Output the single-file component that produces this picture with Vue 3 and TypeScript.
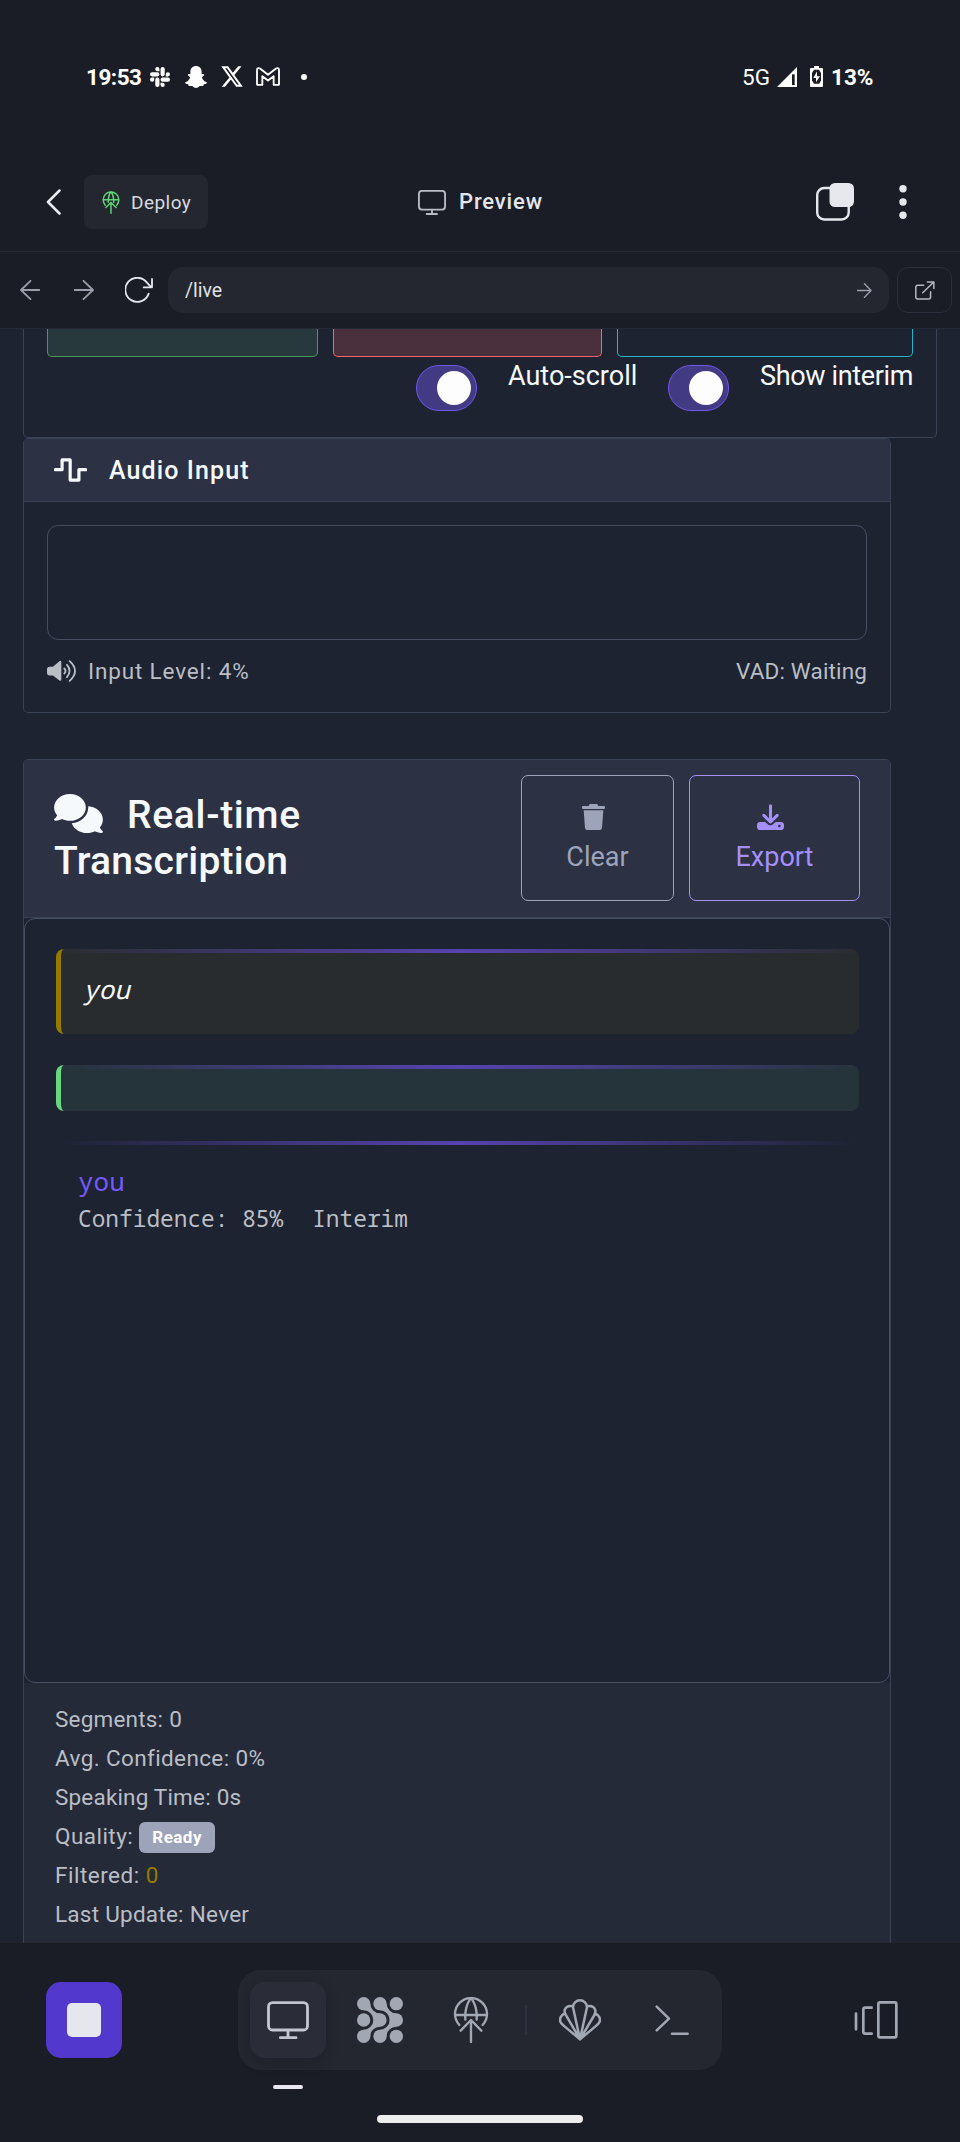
<script setup lang="ts">
interface Stat {
  label: string
  value: string
  cls: string
  kind?: 'badge' | 'warn'
}

const stats: Stat[] = [
  { label: 'Segments:', value: '0', cls: 'segments' },
  { label: 'Avg. Confidence:', value: '0%', cls: 'confidence' },
  { label: 'Speaking Time:', value: '0s', cls: 'speaking' },
  { label: 'Quality:', value: 'Ready', cls: 'quality', kind: 'badge' },
  { label: 'Filtered:', value: '0', cls: 'filtered', kind: 'warn' },
  { label: 'Last Update:', value: 'Never', cls: 'updated' },
]

const toggles = [
  { label: 'Auto-scroll', cls: 'lbl-scroll' },
  { label: 'Show interim', cls: 'lbl-interim' },
]

const gridDots = [0, 49, 98].flatMap((y) => [0, 49, 98].map((x) => ({ x, y })))
const neck = 'M20 0A29 29 0 0 0 49 29L29 49A29 29 0 0 0 0 20Z'
</script>

<template>
  <div class="screen">
    <div class="status">
      <span class="clock">19:53</span>
      <svg class="slack" viewBox="0 0 24 24" fill="#fff"><path d="M5.042 15.165a2.528 2.528 0 0 1-2.52 2.523A2.528 2.528 0 0 1 0 15.165a2.527 2.527 0 0 1 2.522-2.52h2.52v2.52zM6.313 15.165a2.527 2.527 0 0 1 2.521-2.52 2.527 2.527 0 0 1 2.521 2.52v6.313A2.528 2.528 0 0 1 8.834 24a2.528 2.528 0 0 1-2.521-2.522v-6.313zM8.834 5.042a2.528 2.528 0 0 1-2.521-2.52A2.528 2.528 0 0 1 8.834 0a2.528 2.528 0 0 1 2.521 2.522v2.52H8.834zM8.834 6.313a2.528 2.528 0 0 1 2.521 2.521 2.528 2.528 0 0 1-2.521 2.521H2.522A2.528 2.528 0 0 1 0 8.834a2.528 2.528 0 0 1 2.522-2.521h6.312zM18.956 8.834a2.528 2.528 0 0 1 2.522-2.521A2.528 2.528 0 0 1 24 8.834a2.528 2.528 0 0 1-2.522 2.521h-2.522V8.834zM17.688 8.834a2.528 2.528 0 0 1-2.523 2.521 2.527 2.527 0 0 1-2.52-2.521V2.522A2.527 2.527 0 0 1 15.165 0a2.528 2.528 0 0 1 2.523 2.522v6.312zM15.165 18.956a2.528 2.528 0 0 1 2.523 2.522A2.528 2.528 0 0 1 15.165 24a2.527 2.527 0 0 1-2.52-2.522v-2.522h2.52zM15.165 17.688a2.527 2.527 0 0 1-2.52-2.523 2.526 2.526 0 0 1 2.52-2.52h6.313A2.527 2.527 0 0 1 24 15.165a2.528 2.528 0 0 1-2.522 2.523h-6.313z" /></svg>
      <svg class="snap" viewBox="0 0 66 66" fill="#fff"><path d="M33 0C43 0 50 7 50 17v8c3 0 6-2 7 1 1 4-6 5-6 8 0 6 7 13 14 15 2 2-2 5-8 6-2 1-1 5-3 5-5 0-8-1-11 1-3 3-6 5-10 5s-7-2-10-5c-3-2-6-1-11-1-2 0-1-4-3-5-6-1-10-4-8-6 7-2 14-9 14-15 0-3-7-4-6-8 1-3 4-1 7-1v-8C16 7 23 0 33 0z" /></svg>
      <svg class="xlogo" viewBox="1 2 22 20" preserveAspectRatio="none" fill="#fff"><path d="M18.244 2.25h3.308l-7.227 8.26 8.502 11.24H16.17l-5.214-6.817L4.99 21.75H1.68l7.73-8.835L1.254 2.25H8.08l4.713 6.231zm-1.161 17.52h1.833L7.084 4.126H5.117z" /></svg>
      <svg class="gmail" viewBox="0 0 72 56" fill="none" stroke="#fff" stroke-width="5.5" stroke-linejoin="round"><path d="M3 10q0-10 9-6l24 19L60 4q9-4 9 6v42q0 1-2 1H53V27L36 40 19 27v26H5q-2 0-2-2z" /></svg>
      <i class="more-dot" />
      <span class="fill" />
      <span class="net">5G</span>
      <svg class="signal" viewBox="0 0 60 60"><path d="M0 60L60 0v60z" fill="#fff" /><path d="M45 22h8v32h-8z" fill="#1a1d25" /></svg>
      <svg class="battery" viewBox="0 0 39 63"><path d="M12 0h15v6h9q3 0 3 3v51q0 3-3 3H3q-3 0-3-3V9q0-3 3-3h9z" fill="#fff" /><path d="M12 11h15l6 10v22l-5 10H12L6 43V21z" fill="#1a1d25" /><path d="M21 16v15h9L18 49V36h-8z" fill="#fff" /></svg>
      <span class="pct">13%</span>
    </div>

    <header class="titlebar">
      <svg class="chev" viewBox="0 0 15 26" fill="none" stroke="#e9ebf0" stroke-width="2.5" stroke-linecap="round" stroke-linejoin="round"><path d="M13.500 1.500L2 13l11.500 11.500" /></svg>
      <button class="deploy">
        <svg viewBox="1359 199 108 141" fill="none" stroke="#5fd675" stroke-width="9" stroke-linecap="round" stroke-linejoin="round"><path d="M1378 286A48 48 0 1 1 1448 286M1412 205Q1396 225 1396 268M1414 205Q1430 225 1430 268M1366 253H1460M1413 270V335M1382 300L1413 269L1444 300" /></svg>
        <span>Deploy</span>
      </button>
      <div class="title">
        <svg viewBox="0 0 84 75" fill="none" stroke="#b9bdc8" stroke-width="5.5" stroke-linecap="round"><rect x="2.800" y="2.800" width="78.400" height="56" rx="9" /><path d="M42 59v13M26 72h31" /></svg>
        <span>Preview</span>
      </div>
      <span class="fill" />
      <svg class="tabs" viewBox="0 0 38 38"><rect x="1.200" y="5" width="31.500" height="31.500" rx="7" fill="none" stroke="#e6e8ed" stroke-width="2.400" /><rect x="13.500" y="0" width="24.500" height="24" rx="5.500" fill="#e6e8ed" /></svg>
      <svg class="kebab" viewBox="0 0 8 34" fill="#e6e8ed"><circle cx="4" cy="3.700" r="3.700" /><circle cx="4" cy="17" r="3.700" /><circle cx="4" cy="30.300" r="3.700" /></svg>
    </header>

    <nav class="urlrow">
      <svg class="arr back" viewBox="0 0 20 20"><path d="M19.500 10H1M10.500.800L1 10l9.500 9.200" /></svg>
      <svg class="arr fwd" viewBox="0 0 20 20"><path d="M.500 10H19M9.500.800L19 10l-9.500 9.200" /></svg>
      <svg class="reload" viewBox="375 712 84 78" fill="none" stroke="#e4e6ec" stroke-width="5.5" stroke-linecap="round" stroke-linejoin="round"><path d="M446 762A36 36 0 1 1 441 729L454 743M456 718V743H431" /></svg>
      <div class="url">
        <span>/live</span>
        <svg class="go" viewBox="0 0 16 16"><path d="M.500 8H15M8 .800L15 8l-7 7.200" /></svg>
      </div>
      <div class="ext">
        <svg viewBox="1304 722 60 58" fill="none" stroke="#b5b9c4" stroke-width="4.5" stroke-linejoin="round" stroke-linecap="round"><path d="M1330 735H1312Q1306 735 1306 741V771Q1306 777 1312 777H1345Q1351 777 1351 771V755M1341 725H1361V745M1360 726L1327 758" /></svg>
      </div>
    </nav>

    <main class="page">
      <section class="card controls">
        <div class="btns">
          <div class="btn green" />
          <div class="btn red" />
          <div class="btn cyan" />
        </div>
        <div class="toggles">
          <template v-for="t in toggles" :key="t.label">
            <div class="switch"><i /></div>
            <span class="tlabel" :class="t.cls">{{ t.label }}</span>
          </template>
        </div>
      </section>

      <section class="card audio">
        <div class="card-head">
          <svg viewBox="164 444 98 70" fill="none" stroke="#f6f9fc" stroke-width="9.5" stroke-linecap="round" stroke-linejoin="round"><path d="M168 478H188V449H212V509H238V478H258" /></svg>
          <h3>Audio Input</h3>
        </div>
        <div class="audio-body">
          <div class="wave" />
          <div class="levels">
            <svg viewBox="141 449 87 65" fill="none" stroke="#babec6" stroke-width="5.5" stroke-linecap="round"><path fill="#babec6" stroke="none" d="M149 469H159L178 452Q184 449 184 455V507Q184 512 178 510L159 495H149Q141 495 141 487V477Q141 469 149 469Z" /><path d="M193 474Q200 481 193 489M201 463Q216 481 201 500M209 452Q241 481 209 511" /></svg>
            <span class="input-level">Input Level: 4%</span>
            <span class="fill" />
            <span class="vad">VAD: Waiting</span>
          </div>
        </div>
      </section>

      <section class="card transcription">
        <div class="trans-head">
          <h2>
            <svg viewBox="0 0 640 512" fill="#f6f9fc"><path d="M208 352c114.900 0 208-78.800 208-176S322.900 0 208 0S0 78.800 0 176c0 38.600 14.700 74.300 39.600 103.400c-3.500 9.400-8.700 17.700-14.200 24.700c-4.800 6.200-9.700 11-13.300 14.300c-1.800 1.600-3.300 2.900-4.300 3.700c-.5 .4-.9 .7-1.100 .8l-.2 .2C1 327.200-1.400 334.400 .8 340.900S9.100 352 16 352c21.800 0 43.800-5.600 62.100-12.500c9.200-3.500 17.800-7.400 25.200-11.400C134.100 343.300 169.800 352 208 352zM448 176c0 112.300-99.100 196.900-216.500 207C255.800 457.400 336.400 512 432 512c38.200 0 73.900-8.700 104.700-23.900c7.500 4 16 7.900 25.200 11.400c18.300 6.900 40.300 12.500 62.100 12.500c6.900 0 13.100-4.500 15.200-11.100c2.100-6.600-.2-13.800-5.800-17.900l-.2-.2c-.2-.2-.6-.4-1.100-.8c-1-.8-2.500-2-4.300-3.700c-3.600-3.300-8.500-8.100-13.300-14.300c-5.500-7-10.700-15.400-14.200-24.700c24.900-29 39.600-64.700 39.600-103.400c0-92.800-84.900-168.900-192.600-175.500c.4 5.100 .6 10.300 .6 15.500z" /></svg><span class="w1">Real-time</span><br /><span class="w2">Transcription</span>
          </h2>
          <button class="act clear">
            <svg viewBox="306 882 69 78" fill="#9da4b9"><path d="M309 888H326L329 882H352L355 888H372Q375 888 375 891V894Q375 897 372 897H309Q306 897 306 894V891Q306 888 309 888ZM311 901H370L366 954Q365 960 359 960H321Q316 960 315 954Z" /></svg>
            <span>Clear</span>
          </button>
          <button class="act export">
            <svg viewBox="831 882 81 78"><path fill="#a48ffb" fill-rule="evenodd" d="M841 936H855L865 944Q871 948 877 944L887 936H902Q912 936 912 946V950Q912 960 902 960H841Q831 960 831 950V946Q831 936 841 936ZM898 944A4 4 0 1 0 898 952A4 4 0 1 0 898 944Z" /><path d="M871.500 887V935M851.500 916L871.500 936L891.500 916" fill="none" stroke="#a48ffb" stroke-width="9" stroke-linecap="round" stroke-linejoin="round" /></svg>
            <span>Export</span>
          </button>
        </div>
        <div class="trans-wrap">
          <div class="transcript">
            <div class="seg interim"><em>you</em></div>
            <div class="seg final" />
            <div class="seg live">
              <div class="live-text">you</div>
              <div class="live-meta"><span>Confidence: 85%</span><span>Interim</span></div>
            </div>
          </div>
        </div>
        <div class="stats">
          <div v-for="s in stats" :key="s.label" class="stat" :class="s.cls">
            <span>{{ s.label }}</span>
            <span :class="s.kind">{{ s.value }}</span>
          </div>
        </div>
      </section>
    </main>

    <footer class="bottom">
      <div class="dockrow">
        <div class="stop"><i /></div>
        <div class="dock">
          <div class="tile active">
            <svg width="42" height="39" viewBox="0 0 126 117" fill="none" stroke="#c3c6cf" stroke-width="8.5" stroke-linecap="round"><rect x="4.500" y="5" width="117" height="82" rx="12" /><path d="M63 88v22M40 110h47" /></svg>
          </div>
          <div class="tile t2">
            <svg width="46" height="46" viewBox="-20 -20 138 138" fill="#a2a8b3"><circle v-for="d in gridDots" :key="`${d.x}-${d.y}`" :cx="d.x" :cy="d.y" r="20" /><path :d="neck" /><path :d="neck" transform="translate(49 0)" /><path :d="neck" transform="matrix(1 0 0 -1 0 98)" /><path :d="neck" transform="matrix(1 0 0 -1 49 98)" /></svg>
          </div>
          <div class="tile t3">
            <svg width="36" height="47" viewBox="1359 199 108 141" fill="none" stroke="#a2a8b3" stroke-width="7" stroke-linecap="round" stroke-linejoin="round"><path d="M1378 283A48 48 0 1 1 1448 283M1410 206Q1394 228 1396 267M1416 206Q1432 228 1430 267M1366 253H1460M1413 269V334M1382 300L1413 268L1444 300" /></svg>
          </div>
          <i class="sep" />
          <div class="tile t4">
            <svg width="42" height="42" viewBox="237 207 126 126" fill="none" stroke="#a2a8b3" stroke-width="7.5" stroke-linejoin="round" stroke-linecap="round"><path d="M300 328L279 232A21 21 0 0 1 321 232L300 328L345 252M279 229Q260 225 254 240Q253 247 257 254L300 328M321 229Q340 225 346 240Q347 247 343 254M254 250Q240 258 240 270Q240 279 250 286L300 328L350 286Q360 279 360 270Q360 258 346 250" /></svg>
          </div>
          <div class="tile t5">
            <svg width="34" height="31" viewBox="524 224 102 93" fill="none" stroke="#a2a8b3" stroke-width="7.5" stroke-linejoin="round" stroke-linecap="round"><path d="M529 229L566 265L529 300M575 310H622" /></svg>
          </div>
        </div>
        <svg class="panels" viewBox="1123 213 130 114" fill="none" stroke="#a2a8b3" stroke-width="8" stroke-linecap="round" stroke-linejoin="round"><path d="M1128 251V298M1175 233H1156Q1150 233 1150 239V305Q1150 311 1156 311H1175" /><rect x="1195" y="217" width="54" height="105" rx="5" /></svg>
      </div>
      <div class="indicator" />
      <div class="homebar" />
    </footer>
  </div>
</template>

<style>
html,
body {
  margin: 0;
  background: #1a1d25;
}
</style>

<style scoped>
* {
  box-sizing: border-box;
}
.screen {
  width: 960px;
  height: 2142px;
  overflow: hidden;
  background: #1a1d25;
  color: #f6f9fc;
  font-family: Roboto, "Noto Sans", "Liberation Sans", sans-serif;
  display: flex;
  flex-direction: column;
}
svg {
  display: block;
  flex: none;
}
span {
  white-space: nowrap;
}
button {
  font-family: inherit;
  margin: 0;
}
.fill {
  flex: 1;
}

/* status bar */
.status {
  height: 153px;
  flex: none;
  padding: 0 87px 0 86px;
  display: flex;
  align-items: center;
  color: #fff;
}
.clock {
  width: 64px;
  font-size: 22.500px;
  font-weight: 700;
  letter-spacing: -0.500px;
}
.slack { width: 20px; height: 20px; }
.snap { width: 22px; height: 22px; margin-left: 15px; }
.xlogo { width: 22px; height: 21px; margin-left: 14px; }
.gmail { width: 24px; height: 19px; margin-left: 13px; }
.more-dot {
  width: 6px;
  height: 6px;
  border-radius: 50%;
  background: #fff;
  margin-left: 21px;
}
.net { font-size: 22.500px; width: 35px; }
.signal { width: 20px; height: 20px; }
.battery { width: 13px; height: 21px; margin-left: 13px; }
.pct { font-size: 22.500px; font-weight: 700; width: 42px; margin-left: 8px; }

/* title bar */
.titlebar {
  height: 99px;
  flex: none;
  border-bottom: 1px solid #252936;
  padding: 0 53px 0 46px;
  display: flex;
  align-items: center;
}
.chev { width: 15px; height: 26px; }
.deploy {
  width: 124px;
  height: 54px;
  margin-left: 23px;
  padding: 0 0 0 18px;
  border: 0;
  border-radius: 8px;
  background: #24272f;
  color: #d8dae0;
  font-size: 19px;
  letter-spacing: 0.450px;
  display: flex;
  align-items: center;
}
.deploy svg { width: 18px; height: 23px; }
.deploy span { margin-left: 11px; }
.title {
  margin-left: 210px;
  display: flex;
  align-items: center;
  font-size: 22px;
  font-weight: 500;
  letter-spacing: 0.850px;
  color: #e4e6ec;
}
.title svg { width: 28px; height: 25px; }
.title span { margin-left: 13px; margin-top: -2px; }
.tabs { width: 38px; height: 38px; }
.kebab { width: 8px; height: 34px; margin-left: 45px; }

/* address row */
.urlrow {
  height: 77px;
  flex: none;
  border-bottom: 1px solid #252936;
  padding: 0 8px 0 20px;
  display: flex;
  align-items: center;
}
.arr,
.go {
  width: 20px;
  height: 20px;
  fill: none;
  stroke: #9a9eab;
  stroke-width: 1.800;
  stroke-linecap: round;
  stroke-linejoin: round;
}
.fwd { margin-left: 34px; }
.reload { width: 28px; height: 26px; margin-left: 31px; }
.url {
  width: 721px;
  height: 46px;
  margin-left: 15px;
  padding: 0 17px;
  border-radius: 15px;
  background: #24272f;
  display: flex;
  align-items: center;
  justify-content: space-between;
  font-size: 19.500px;
  color: #e0e2e8;
}
.go { width: 15px; height: 15px; stroke-width: 1.500; }
.ext {
  width: 55px;
  height: 46px;
  margin-left: 8px;
  border: 1px solid #2b2e3b;
  border-radius: 11px;
  display: flex;
  align-items: center;
  justify-content: center;
}
.ext svg { width: 20px; height: 19px; }

/* page */
.page {
  height: 1614px;
  flex: none;
  overflow: hidden;
  padding-left: 23px;
  background: #1d2331;
}
.card {
  width: 868px;
  border: 1px solid #3a4256;
  border-radius: 5px;
  overflow: hidden;
}
.controls {
  width: 914px;
  height: 109px;
  border-top: 0;
  border-radius: 0 0 5px 5px;
  padding: 0 23px;
}
.btns {
  display: flex;
  gap: 15px;
}
.btn {
  height: 28px;
  border: 1px solid;
  border-top: 0;
  border-radius: 0 0 5px 5px;
}
.green { width: 271px; border-color: #4b9760; background: #28393d; }
.red { width: 269px; border-color: #f8646b; background: #4a303d; }
.cyan { width: 296px; border-color: #25b5cd; }
.toggles {
  margin-top: 8px;
  display: flex;
  justify-content: flex-end;
  gap: 31px;
}
.switch {
  width: 61px;
  height: 46px;
  border: 1px solid #7057f0;
  border-radius: 23px;
  background: #433a84;
  display: flex;
  align-items: center;
  justify-content: flex-end;
  padding-right: 5px;
}
.switch i {
  width: 34px;
  height: 34px;
  border-radius: 50%;
  background: #fdfdfd;
}
.tlabel {
  font-size: 27px;
  line-height: 22px;
}
.lbl-scroll { width: 129px; }
.lbl-interim { width: 153px; letter-spacing: -0.350px; }

.audio { height: 275px; }
.card-head {
  height: 63px;
  border-bottom: 1px solid #3a4256;
  background: #2c3144;
  padding-left: 30px;
  display: flex;
  align-items: center;
}
.card-head svg { width: 33px; height: 24px; }
.card-head h3 {
  margin: 0 0 0 22px;
  font-size: 25px;
  font-weight: 500;
  letter-spacing: 1.100px;
}
.audio-body { padding: 23px; }
.wave {
  height: 115px;
  border: 1px solid #474d60;
  border-radius: 11px;
}
.levels {
  margin-top: 16px;
  height: 30px;
  display: flex;
  align-items: center;
  font-size: 22.500px;
  color: #babec6;
}
.levels svg { width: 29px; height: 22px; }
.input-level { margin-left: 12px; letter-spacing: 0.850px; }
.vad { letter-spacing: 0.150px; }

.transcription {
  margin-top: 46px;
  height: 1220px;
}
.trans-head {
  height: 158px;
  border-bottom: 1px solid #3a4256;
  background: #2c3144;
  padding: 15px 30px 0;
  display: flex;
  align-items: flex-start;
}
.trans-head h2 {
  margin: 17px 0 0;
  width: 467px;
  font-size: 39px;
  font-weight: 500;
  line-height: 46px;
}
.trans-head h2 svg {
  display: inline-block;
  width: 49px;
  height: 39px;
  vertical-align: -5px;
  margin-right: 24px;
}
.w1 { letter-spacing: 0.700px; }
.w2 { letter-spacing: 0.250px; }
.act {
  height: 126px;
  padding: 0;
  border: 1px solid;
  border-radius: 7px;
  background: transparent;
  font-size: 27px;
  display: flex;
  flex-direction: column;
  align-items: center;
}
.act svg { height: 26px; margin: 28px 8px 0 0; }
.act span { line-height: 32px; margin-top: 11px; }
.clear { width: 153px; color: #9da4b9; border-color: #9da4b9; }
.clear svg { width: 23px; }
.export { width: 171px; margin-left: 15px; color: #a48ffb; border-color: #a48ffb; }
.export svg { width: 27px; }

.trans-wrap { background: #1d2331; }
.transcript {
  height: 765px;
  border: 1px solid #474f63;
  border-radius: 11px;
  padding: 30px 30px 0 31px;
  display: flex;
  flex-direction: column;
}
.seg {
  overflow: hidden;
  font-family: "Noto Sans Mono", "DejaVu Sans Mono", monospace;
  border-radius: 8px;
  border-left: 5px solid transparent;
  background-repeat: no-repeat;
  background-size: 100% 4px;
  background-image: linear-gradient(90deg, transparent, #5643af, transparent);
}
.interim {
  height: 85px;
  background-color: #292c2f;
  border-left-color: #967b00;
  padding: 21px 0 0 22px;
  font-size: 26px;
  line-height: 38px;
}
.final {
  height: 46px;
  margin-top: 31px;
  background-color: #25343b;
  border-left-color: #68d880;
}
.live {
  margin-top: 30px;
  padding: 20px 0 0 18px;
  border-left: 0;
  padding-left: 22px;
}
.live-text {
  font-size: 26px;
  line-height: 40px;
  color: #7659fb;
}
.live-meta {
  margin-top: 1px;
  display: flex;
  gap: 29px;
  font-size: 22.800px;
  line-height: 34px;
  color: #babec6;
}
.stats {
  height: 300px;
  padding: 16px 31px;
  background: #252a39;
  font-size: 22.500px;
  color: #babec6;
}
.stat {
  height: 39px;
  display: flex;
  align-items: center;
  gap: 6px;
}
.segments { letter-spacing: 0.200px; }
.confidence { letter-spacing: 0.380px; }
.speaking { letter-spacing: 0.180px; }
.quality { letter-spacing: 0.450px; }
.filtered { letter-spacing: 0.500px; }
.updated { letter-spacing: 0.250px; }
.badge {
  width: 76px;
  height: 31px;
  margin-top: 4px;
  border-radius: 6px;
  background: #9da4b9;
  color: #fff;
  font-size: 17px;
  font-weight: 700;
  line-height: 31px;
  text-align: center;
}
.warn { color: #967b00; }

/* bottom navigation */
.bottom {
  flex: 1;
  padding: 27px 62px 0 46px;
}
.dockrow {
  height: 100px;
  display: flex;
  align-items: center;
}
.stop {
  width: 76px;
  height: 76px;
  border-radius: 15px;
  background: #5238cc;
  display: flex;
  align-items: center;
  justify-content: center;
}
.stop i {
  width: 34px;
  height: 34px;
  border-radius: 5px;
  background: #e6e7ee;
}
.dock {
  width: 484px;
  height: 100px;
  margin-left: 116px;
  padding: 0 12px;
  border-radius: 23px;
  background: #24272f;
  display: flex;
  align-items: center;
}
.tile {
  width: 76px;
  height: 76px;
  border-radius: 15px;
  display: flex;
  align-items: center;
  justify-content: center;
}
.active {
  background: #2a2c38;
  box-shadow: 0 4px 12px rgba(20, 20, 28, 0.35);
}
.t2 { margin-left: 16px; }
.t3 { margin-left: 15px; }
.sep {
  width: 2px;
  height: 30px;
  margin: 0 15px 0 16px;
  background: #2f323e;
}
.t5 { margin-left: 16px; }
.panels {
  width: 44px;
  height: 38px;
  margin-left: auto;
}
.indicator {
  width: 30px;
  height: 4px;
  margin: 15px 0 0 227px;
  border-radius: 2px;
  background: #e9e7f0;
}
.homebar {
  width: 206px;
  height: 8px;
  margin: 26px 0 0 331px;
  border-radius: 4px;
  background: #eee;
}
</style>
